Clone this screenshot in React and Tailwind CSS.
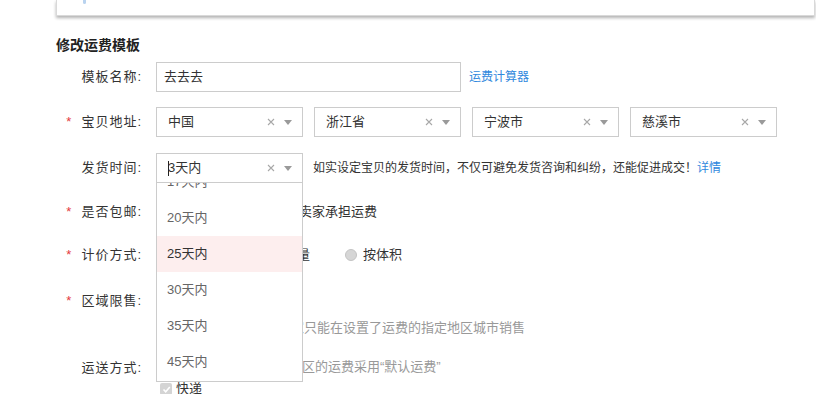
import clsx from "clsx";

function Clear() {
  return (
    <svg width="8" height="8" viewBox="0 0 8 8" className="shrink-0">
      <path d="M1 1L7 7M7 1L1 7" stroke="#a8a8a8" strokeWidth="1.1" />
    </svg>
  );
}

function Arrow() {
  return <span className="ml-[9px] h-0 w-0 shrink-0 border-x-[4px] border-t-[5px] border-x-transparent border-t-[#9a9a9a]" />;
}

function Select({ value, cursor, children }) {
  return (
    <div className="relative flex h-[30px] w-[147px] shrink-0 items-center border border-[#ccc] bg-white pl-[11px] pr-[10px]">
      {cursor && <span className="mr-[-1px] h-[15px] w-px bg-[#222]" />}
      <span className="flex-1 text-[13px] leading-[30px] text-[#333]">{value}</span>
      <Clear />
      <Arrow />
      {children}
    </div>
  );
}

function Label({ required, text }) {
  return (
    <div className="flex w-[142px] shrink-0 items-center justify-end text-[13px] text-[#333]">
      {required && <span className="mr-[10px] text-[13px] text-[#e4393c]">*</span>}
      <span className="tracking-[1px]">{text}</span>
    </div>
  );
}

function Radio({ text }) {
  return (
    <div className="flex items-center">
      <span className="h-[12px] w-[12px] rounded-full border border-[#c4c4c4] bg-[#d6d6d6]" />
      <span className="ml-[6px] text-[13px] text-[#333]">{text}</span>
    </div>
  );
}

const days = ["17天内", "20天内", "25天内", "30天内", "35天内", "45天内"];

export default function App() {
  return (
    <div className="h-[394px] w-[816px] overflow-hidden bg-white font-['Liberation_Sans','Noto_Sans_CJK_SC',sans-serif] leading-5">
      {/* card above, only its bottom is on screen */}
      <div className="ml-14 h-4 w-[759px] border border-t-0 border-[#d9d9d9] pl-[26px] shadow-[0_2px_3px_rgba(0,0,0,0.3)]">
        <div className="h-[4px] w-[3px] rounded-b bg-[#b9d3ef]" />
      </div>

      <h2 className="ml-14 mt-[19px] text-[14px] font-bold leading-5 text-[#222]">修改运费模板</h2>

      <div className="mt-[7px] flex h-[30px] items-center gap-[14px]">
        <Label text="模板名称:" />
        <div className="flex h-[30px] w-[305px] items-center border border-[#ccc] pl-[7px] text-[13px] text-[#333]">去去去</div>
        <a className="ml-[-6px] text-[12px] text-[#3088dd]">运费计算器</a>
      </div>

      <div className="mt-[15px] flex h-[30px] items-center gap-[14px]">
        <Label required text="宝贝地址:" />
        <div className="flex gap-[11px]">
          <Select value="中国" />
          <Select value="浙江省" />
          <Select value="宁波市" />
          <Select value="慈溪市" />
        </div>
      </div>

      <div className="relative z-10 mt-[16px] flex h-[30px] items-center gap-[14px]">
        <Label text="发货时间:" />
        <Select value="3天内" cursor>
          <div className="absolute left-[-1px] top-[28px] h-[200px] w-[147px] overflow-hidden border border-[#ccc] bg-white">
            <div className="mt-[-19px]">
              {days.map((d) => (
                <div
                  key={d}
                  className={clsx(
                    "flex h-9 items-center pl-[10px] text-[13px]",
                    d === "25天内" ? "bg-[#fdeeee] text-[#333]" : "text-[#666]"
                  )}
                >
                  {d}
                </div>
              ))}
            </div>
          </div>
        </Select>
        <p className="ml-[-4px] text-[12px] text-[#333]">
          如实设定宝贝的发货时间，不仅可避免发货咨询和纠纷，还能促进成交！<a className="text-[#3088dd]">详情</a>
        </p>
      </div>

      <div className="mt-[19px] flex h-5 items-center gap-[14px]">
        <Label required text="是否包邮:" />
        <div className="flex items-center gap-[37px] pl-[5px]">
          <Radio text="自定义运费" />
          <Radio text="卖家承担运费" />
        </div>
      </div>

      <div className="mt-[23px] flex h-5 items-center gap-[14px]">
        <Label required text="计价方式:" />
        <div className="flex items-center gap-[35px] pl-[5px]">
          <Radio text="按件数" />
          <Radio text="按重量" />
          <Radio text="按体积" />
        </div>
      </div>

      <div className="mt-[26px] flex h-5 items-center gap-[14px]">
        <Label required text="区域限售:" />
        <div className="flex items-center gap-[35px] pl-[5px]">
          <Radio text="不限制" />
          <Radio text="限售" />
        </div>
      </div>

      <p className="ml-[174px] mt-[7px] text-[13px] leading-5 text-[#999]">设置后，该宝贝的买家只能在设置了运费的指定地区城市销售</p>

      <div className="mt-[20px] flex h-5 items-center gap-[14px]">
        <Label text="运送方式:" />
        <p className="ml-[16px] mt-[-3px] text-[13px] text-[#999]">除指定地区外，其余地区的运费采用“默认运费”</p>
      </div>

      <div className="ml-[160px] mt-px flex h-5 items-center">
        <span className="flex h-[12px] w-[12px] items-center justify-center rounded-[2px] bg-[#d4d4d4]">
          <svg width="9" height="9" viewBox="0 0 9 9">
            <path d="M1.5 4.5L3.7 6.8L7.8 2" fill="none" stroke="#fff" strokeWidth="1.6" />
          </svg>
        </span>
        <span className="ml-[4px] text-[13px] text-[#333]">快递</span>
      </div>
    </div>
  );
}
